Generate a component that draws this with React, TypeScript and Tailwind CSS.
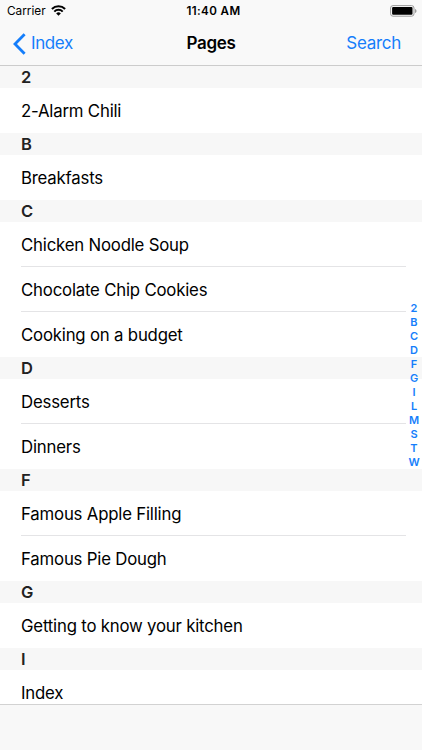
import { clsx } from 'clsx';

const sections = [
  { letter: '2', pages: ['2-Alarm Chili'] },
  { letter: 'B', pages: ['Breakfasts'] },
  { letter: 'C', pages: ['Chicken Noodle Soup', 'Chocolate Chip Cookies', 'Cooking on a budget'] },
  { letter: 'D', pages: ['Desserts', 'Dinners'] },
  { letter: 'F', pages: ['Famous Apple Filling', 'Famous Pie Dough'] },
  { letter: 'G', pages: ['Getting to know your kitchen'] },
  { letter: 'I', pages: ['Index'] },
];

const indexLetters = ['2', 'B', 'C', 'D', 'F', 'G', 'I', 'L', 'M', 'S', 'T', 'W'];

function WifiIcon() {
  return (
    <svg width="15" height="11" viewBox="0 0 15 11" fill="none" stroke="black" strokeWidth="2">
      <path d="M.9 4a9.3 9.3 0 0 1 13.2 0" />
      <path d="M3.3 6.6a5.9 5.9 0 0 1 8.4 0" />
      <path d="M7.5 10.7 5.2 8.4a3.2 3.2 0 0 1 4.6 0z" fill="black" stroke="none" />
    </svg>
  );
}

function BatteryIcon() {
  return (
    <svg width="27" height="12" viewBox="0 0 27 12">
      <rect x="0.6" y="0.6" width="23.4" height="10.6" rx="2.4" fill="none" stroke="#9b9b9b" strokeWidth="1" />
      <rect x="2.1" y="2.1" width="20.4" height="7.6" rx="1" fill="black" />
      <path d="M25 4v4c.9-.3 1.5-1.1 1.5-2s-.6-1.7-1.5-2z" fill="#9b9b9b" />
    </svg>
  );
}

function StatusBar() {
  return (
    <div className="grid h-[22px] grid-cols-3 items-center pl-[7px] pr-[5px] text-black">
      <div className="flex items-center gap-[5px]">
        <span className="pt-px text-[11.8px] leading-none">Carrier</span>
        <WifiIcon />
      </div>
      <span className="pl-[3px] pt-[2px] text-center text-[11.6px] font-semibold leading-none tracking-[0.4px]">
        11:40 AM
      </span>
      <div className="flex justify-end">
        <BatteryIcon />
      </div>
    </div>
  );
}

function NavBar() {
  return (
    <header className="h-[65.6px] shrink-0 border-b border-[#cccccc] bg-[#f9f9f9]">
      <StatusBar />
      <div className="grid h-[43px] grid-cols-3 items-center pl-[13px] pr-[21px] text-[17px] leading-none">
        <button className="flex items-center gap-[5px] text-[#157efb]">
          <svg width="13" height="22" viewBox="0 0 13 22" fill="none" stroke="currentColor" strokeWidth="2.8">
            <path d="M11.6 1.2 2 11l9.6 9.8" />
          </svg>
          <span className="tracking-[-0.4px]">Index</span>
        </button>
        <h1 className="pl-2 text-center font-semibold tracking-[-0.3px] text-black">Pages</h1>
        <button className="text-right tracking-[-0.3px] text-[#157efb]">Search</button>
      </div>
    </header>
  );
}

export default function App() {
  return (
    <div className="relative flex h-[750px] w-[422px] flex-col overflow-hidden bg-white font-['Inter',sans-serif]">
      <NavBar />

      <main className="min-h-0 flex-1 overflow-hidden">
        {sections.map((section) => (
          <section key={section.letter}>
            <h2 className="flex h-[22.4px] items-center bg-[#f7f7f7] pl-[21px] pt-px text-[16.5px] font-semibold leading-none text-[#222222]">
              {section.letter}
            </h2>
            <ul>
              {section.pages.map((page, i) => (
                <li key={page} className="h-[44.8px] pl-[21px] pr-4">
                  <div
                    className={clsx(
                      'flex h-full items-center pt-[2px] text-[16.8px] leading-none tracking-[-0.2px] text-black',
                      i < section.pages.length - 1 && 'border-b border-[#e4e4e6]'
                    )}
                  >
                    {page}
                  </div>
                </li>
              ))}
            </ul>
          </section>
        ))}
      </main>

      {/* Bottom toolbar */}
      <footer className="h-[46px] shrink-0 border-t border-[#d2d2d2] bg-[#f8f8f8]" />

      {/* Section index, floats over the list */}
      <nav className="absolute right-0 top-[301px] flex w-4 flex-col">
        {indexLetters.map((letter) => (
          <a
            key={letter}
            className="flex h-[14px] items-center justify-center text-[11px] font-semibold leading-none text-[#157efb]"
          >
            {letter}
          </a>
        ))}
      </nav>
    </div>
  );
}
